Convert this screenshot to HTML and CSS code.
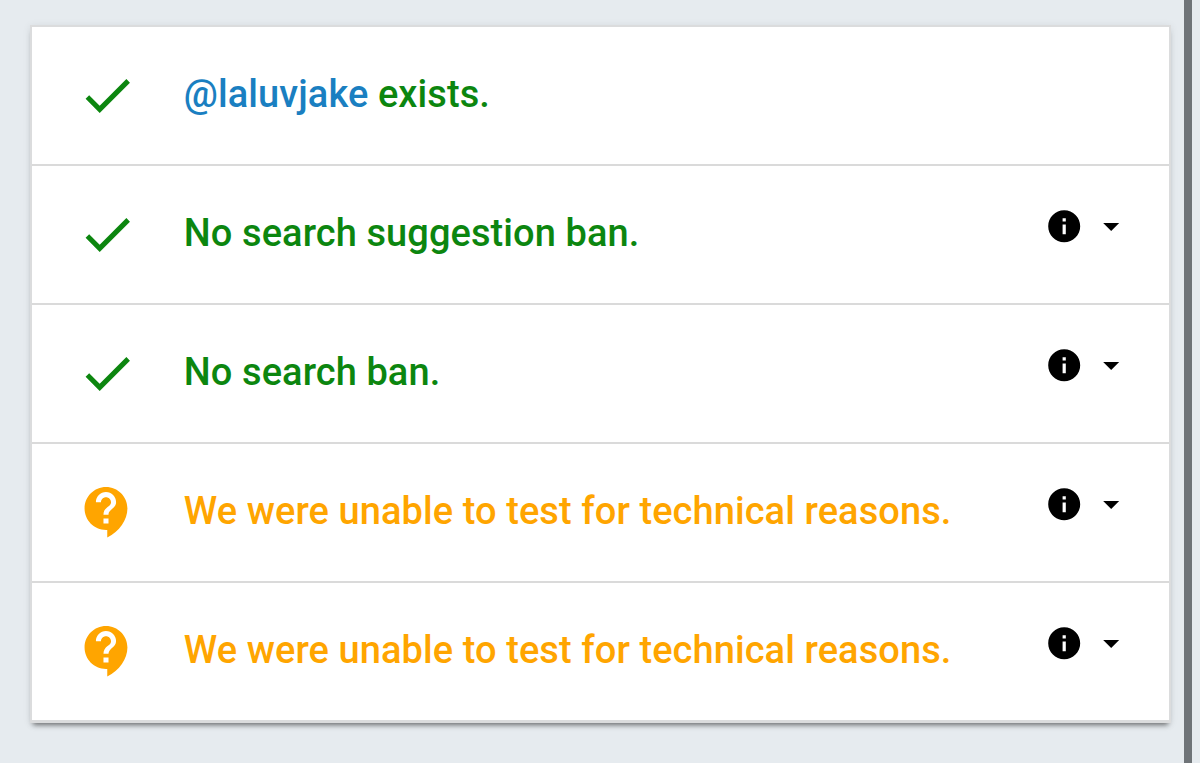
FILE: index.html
```
<!DOCTYPE html>
<html lang="en">
<head>
    <meta charset="UTF-8">
    <meta name="viewport" content="width=device-width, initial-scale=1.0">
    <title>Shadowban Test</title>
    <link rel="stylesheet" href="styles.css">
</head>
<body>
    <!-- Shared icons -->
    <svg class="sprite">
        <symbol id="check" viewBox="0 0 24 24">
            <path d="M9 16.17L4.83 12l-1.42 1.41L9 19 21 7l-1.41-1.41z"/>
        </symbol>
        <symbol id="unknown" viewBox="0 0 24 24">
            <path d="M11.5 2C6.81 2 3 5.81 3 10.5S6.81 19 11.5 19h.5v3c4.86-2.34 8-7 8-11.5C20 5.81 16.19 2 11.5 2zm1 14.5h-2v-2h2v2zm0-3.5h-2c0-3.25 3-3 3-5 0-1.1-.9-2-2-2s-2 .9-2 2h-2c0-2.21 1.79-4 4-4s4 1.79 4 4c0 2.5-3 2.75-3 5z"/>
        </symbol>
        <symbol id="info" viewBox="0 0 24 24">
            <path d="M12 2C6.48 2 2 6.48 2 12s4.48 10 10 10 10-4.48 10-10S17.52 2 12 2zm1 15h-2v-6h2v6zm0-8h-2V7h2v2z"/>
        </symbol>
        <symbol id="arrow" viewBox="0 0 24 24">
            <path d="M7 10l5 5 5-5z"/>
        </symbol>
    </svg>

    <ul class="results">
        <li class="result ok">
            <svg class="status"><use href="#check"/></svg>
            <span class="message"><a href="#">@laluvjake</a> exists.</span>
        </li>
        <li class="result ok">
            <svg class="status"><use href="#check"/></svg>
            <span class="message">No search suggestion ban.</span>
            <div class="more">
                <svg><use href="#info"/></svg>
                <svg><use href="#arrow"/></svg>
            </div>
        </li>
        <li class="result ok">
            <svg class="status"><use href="#check"/></svg>
            <span class="message">No search ban.</span>
            <div class="more">
                <svg><use href="#info"/></svg>
                <svg><use href="#arrow"/></svg>
            </div>
        </li>
        <li class="result warn">
            <svg class="status"><use href="#unknown"/></svg>
            <span class="message">We were unable to test for technical reasons.</span>
            <div class="more">
                <svg><use href="#info"/></svg>
                <svg><use href="#arrow"/></svg>
            </div>
        </li>
        <li class="result warn">
            <svg class="status"><use href="#unknown"/></svg>
            <span class="message">We were unable to test for technical reasons.</span>
            <div class="more">
                <svg><use href="#info"/></svg>
                <svg><use href="#arrow"/></svg>
            </div>
        </li>
    </ul>
    <div class="scrollbar"></div>
</body>
</html>
```
FILE: styles.css
```
* {
    box-sizing: border-box;
}

body {
    margin: 0;
    height: 763px;
    padding: 0 8px 0 30px;
    display: flex;
    align-items: flex-start;
    overflow: hidden;
    background-color: #e6ebef;
    font-family: Roboto, sans-serif;
}

.sprite {
    display: none;
}

.results {
    width: 1141px;
    margin: 25px 0 0;
    padding: 0;
    list-style: none;
    background-color: #fff;
    border: 2px solid #dbdcdd;
    border-bottom-width: 3px;
    box-shadow: 0 5px 5px -3px rgba(0, 0, 0, 0.5), 0 1px 8px rgba(0, 0, 0, 0.08);
}

.result {
    height: 139px;
    padding: 0 38.5px 0 44.5px;
    display: flex;
    align-items: flex-start;
    border-bottom: 2px solid #dadada;
}

.result:last-child {
    height: 137px;
    border-bottom: none;
}

.status {
    width: 60.5px;
    height: 60.5px;
    margin: 37.5px 46.8px 0 0;
    flex: none;
    fill: currentColor;
}

.message {
    flex: 1;
    margin-top: 42px;
    font-size: 38px;
    font-weight: 500;
    letter-spacing: 0.08px;
    line-height: 50px;
    white-space: nowrap;
}

.message a {
    color: #1a7fc1;
    text-decoration: none;
}

.ok {
    color: #0c860f;
}

.warn {
    color: #ffa500;
}

.more {
    display: flex;
    gap: 8.7px;
    margin-top: 41.2px;
    color: #000;
}

.more svg {
    width: 38.4px;
    height: 38.4px;
    fill: currentColor;
}

.scrollbar {
    width: 8px;
    height: 763px;
    margin-left: auto;
    background-color: #6f7478;
}
```
